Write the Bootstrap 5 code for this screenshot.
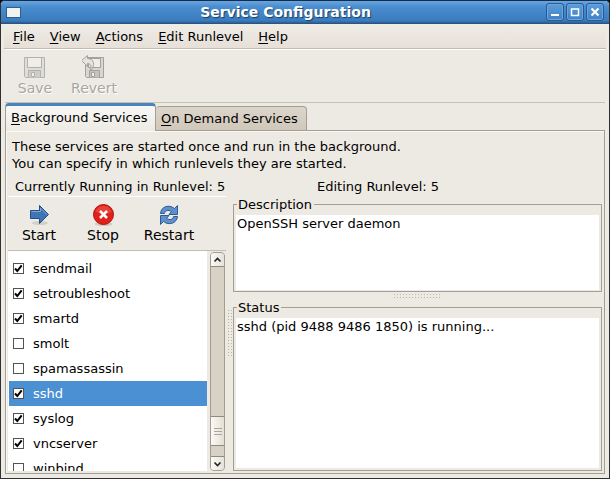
<!DOCTYPE html>
<html lang="en">
<head>
<meta charset="utf-8">
<meta name="viewport" content="width=device-width, initial-scale=1">
<title>Service Configuration</title>
<link href="https://cdn.jsdelivr.net/npm/bootstrap@5.3.0/dist/css/bootstrap.min.css" rel="stylesheet">
<style>
:root { --face: #edeae3; --edge: #a39f94; --blue: #4a90d2; }
body { font: 13px/17px "DejaVu Sans", sans-serif; color: #000; background: #111; }
.window { height: 100vh; background: var(--face); border: 1px solid #303030; border-top-color: #142c4c; border-radius: 5px 5px 0 0; }
.titlebar { height: 23px; padding: 0 5px; background: linear-gradient(#6aa6de, #4a8ed0 25%, #3a7bbd 90%, #2b5d92); border-bottom: 1px solid #2b5580; }
.titlebar h1 { font-size: 14px; line-height: 21px; font-weight: 700; color: #fff; text-shadow: 1px 1px 1px #1b3d66; }
.sysmenu { width: 15px; height: 11px; background: #f0f2ef; border: 1px solid #2e608f; }
.winbtn { width: 18px; height: 18px; border: 1px solid #28598f; border-radius: 3px; background: linear-gradient(#5b9cda, #3f82c6); box-shadow: inset 0 0 0 1px #6ba6de; }
.controls { gap: 2px; }
.controls svg { display: block; }
.menus { height: 25px; padding: 0 5px; background: linear-gradient(#efece6, #e6e0d8); border-bottom: 1px solid #c1bbb0; margin: 0 3px; }
.menus a, .page-tab { color: #000; text-decoration: none; }
.menus a { padding: 0 4px; margin-right: 7px; }
u { text-underline-offset: 2px; }
.toolbar { height: 54px; margin: 0 4px; padding: 5px 8px 0; border-top: 1px solid #fff; border-bottom: 1px solid #c7c2b8; }
.tool { border: 0; background: none; padding: 0; color: #000; font-size: 14px; line-height: 16px; }
.tool svg { display: block; margin: 0 auto; }
.toolbar .tool { color: #aaa69e; text-shadow: 1px 1px 0 #fff; }
.tool-save { width: 44px; }
.tool-revert { width: 74px; }
.tabs { height: 28px; margin: 0 4px; position: relative; z-index: 1; }
.page-tab { min-width: 151px; border: 1px solid var(--edge); border-radius: 4px 4px 0 0; padding: 0 5px; background: linear-gradient(#dcd5c9, #d0c8ba); height: 25px; line-height: 24px; border-left: 0; }
.page-tab.active { height: 28px; line-height: 24px; border-left: 1px solid var(--edge); border-top: 3px solid #4885bd; border-bottom: 0; background: linear-gradient(#f8f8f5, var(--face)); }
.page-pane { margin: -1px 4px 4px; border: 1px solid var(--edge); padding: 7px 2px 2px; box-shadow: inset 1px 1px 0 #faf8f4; }
.intro { padding-left: 4px; }
.levels { padding: 6px 7px 0; height: 24px; }
.level-run { width: 302px; }
.left-pane { width: 218px; }
.actions { height: 55px; border-top: 1px solid #fff; border-bottom: 1px solid #c1bcb1; padding: 6px 6px 0; }
.act-start { width: 50px; }
.act-stop { width: 78px; }
.act-restart { width: 54px; }
.services { background: #fff; padding: 5px 0 0 1px; }
.service { height: 25px; padding-left: 4px; gap: 9px; flex: none; }
.service.picked { background: var(--blue); color: #fff; }
.service input { appearance: none; width: 11px; height: 11px; margin: 0; border: 1px solid #55534e; background: #fff; flex: none; }
.service input:checked { background: #fff url("data:image/svg+xml,%3Csvg xmlns='http://www.w3.org/2000/svg' viewBox='0 0 9 9'%3E%3Cpath d='M1 4.5 3.3 7 7.7 1.3' fill='none' stroke='%23000' stroke-width='2'/%3E%3C/svg%3E") center / 9px 9px no-repeat; }
.scroller { width: 15px; margin: 1px 1px 0 3px; background: #d8d2c6; border: 1px solid #a39d91; border-radius: 4px; }
.scroller button { height: 14px; padding: 0; border: 0; background: linear-gradient(90deg, #fbfaf7, #e6e1d9); }
.scroller button:first-child { border-bottom: 1px solid #8f897e; border-radius: 3px 3px 0 0; }
.scroller button:last-child { border-top: 1px solid #8f897e; border-radius: 0 0 3px 3px; }
.scroller svg { display: block; margin: auto; }
.thumb { height: 30px; margin-bottom: 10px; border: solid #8f897e; border-width: 1px 0; background: linear-gradient(90deg, #fbfaf7, #e4dfd6); gap: 2px; }
.thumb span { width: 8px; height: 1px; background: #aaa59b; }
.grip { background: radial-gradient(circle, #b9b4a9 0 1px, transparent 1px) 0 0 / 3px 3px; }
.grip-v { width: 5px; height: 48px; margin: 113px 1px 0; }
.grip-h { width: 49px; height: 5px; margin: 1px auto; }
.framed { border: 1px solid var(--edge); padding: 2px; margin: 0; min-width: 0; }
.framed legend { float: none; width: auto; font-size: 13px; line-height: 17px; margin: 0 0 0 1px; padding: 0 2px 0 1px; }
.readout { background: #fff; padding: 0 1px; overflow: hidden; }
.desc-box { height: 96px; }
.desc-box .readout { height: 75px; }
.status-box .readout { height: 100%; }
</style>
<script src="https://cdn.jsdelivr.net/npm/bootstrap@5.3.0/dist/js/bootstrap.bundle.min.js"></script>
</head>
<body>
<div class="window d-flex flex-column overflow-hidden">
  <header class="titlebar d-flex align-items-center flex-shrink-0">
    <span class="sysmenu"></span>
    <h1 class="flex-grow-1 text-center m-0 ps-1">Service Configuration</h1>
    <div class="controls d-flex">
      <button class="winbtn p-0" aria-label="Minimize"><svg width="16" height="16"><path d="M4 11h8" stroke="#fff" stroke-width="2"/></svg></button>
      <button class="winbtn p-0" aria-label="Maximize"><svg width="16" height="16"><path d="M4.500 5h7v6.500h-7zM4 5h8" fill="none" stroke="#fff" stroke-width="1.500"/></svg></button>
      <button class="winbtn p-0" aria-label="Close"><svg width="16" height="16"><path d="m4.500 4.500 7 7m0-7-7 7" stroke="#fff" stroke-width="2.200"/></svg></button>
    </div>
  </header>
  <nav class="menus d-flex align-items-center flex-shrink-0">
    <a href="#"><u>F</u>ile</a><a href="#"><u>V</u>iew</a><a href="#"><u>A</u>ctions</a><a href="#"><u>E</u>dit Runlevel</a><a href="#"><u>H</u>elp</a>
  </nav>
  <div class="toolbar d-flex align-items-start flex-shrink-0">
    <button class="tool tool-save" disabled><svg width="24" height="25" viewBox="0 0 24 25" fill="none" stroke="#b3b1ab"><path d="M1.500 2.500h20v20h-19l-1-1z" fill="#dfddd7"/><path d="M4.500 2.500h14v10h-14z" fill="#eeede8"/><path d="M5.500 22.500v-7h12v7" fill="#cfcdc7"/><path d="M8.500 17.500h3v4h-3z" fill="#f0eee9"/></svg>Save</button>
    <button class="tool tool-revert" disabled><svg width="24" height="25" viewBox="0 0 24 25" fill="none" stroke="#a3a19b"><path d="M3.500 2.500h18v20h-17l-1-1z" fill="#d8d6d0"/><path d="M6.500 3.500h12v9h-12z" fill="#eeede8"/><path d="M7.500 22.500v-7h10v7" fill="#c4c2bc"/><path d="M9.500 17.500h3v4h-3z" fill="#f0eee9"/><path d="M-.5 5.500 5.500.5v3c7 0 8 7 3 12 1-5 0-7-3-7v3z" fill="#e5e3dd"/></svg>Revert</button>
  </div>
  <div class="tabs d-flex align-items-end flex-shrink-0">
    <a href="#" class="page-tab active"><u>B</u>ackground Services</a>
    <a href="#" class="page-tab"><u>O</u>n Demand Services</a>
  </div>
  <main class="page-pane d-flex flex-column flex-grow-1 overflow-hidden">
    <p class="intro m-0">These services are started once and run in the background.<br>You can specify in which runlevels they are started.</p>
    <div class="levels d-flex flex-shrink-0"><span class="level-run">Currently Running in Runlevel: 5</span><span>Editing Runlevel: 5</span></div>
    <div class="d-flex flex-grow-1 overflow-hidden">
      <section class="left-pane d-flex flex-column flex-shrink-0">
        <div class="actions d-flex flex-shrink-0 align-items-start">
          <button class="tool act-start"><svg width="24" height="24" viewBox="0 0 24 24"><ellipse cx="13" cy="20" rx="8" ry="2" fill="#d2cfc7"/><path d="M3.500 7.500h9V2.500l9 9-9 9v-5h-9z" fill="#3f74b5" stroke="#244d82"/><path d="M4.500 8.500h9V5l6.500 6.500" fill="none" stroke="#7da8d8"/></svg>Start</button>
          <button class="tool act-stop"><svg width="24" height="24" viewBox="0 0 24 24"><ellipse cx="12.500" cy="21" rx="9" ry="2" fill="#cfccc4"/><circle cx="12.500" cy="11.500" r="10" fill="#e0201b" stroke="#b00e0b"/><path d="M4.500 9c2-8 14-8 16 0-4 3-10 1-16 0z" fill="#f0604f" opacity=".5"/><path d="m9 8 7 7m0-7-7 7" stroke="#fff" stroke-width="2.500"/></svg>Stop</button>
          <button class="tool act-restart"><svg width="24" height="24" viewBox="0 0 24 24" fill="#5e90cb" stroke="#2f5c95"><path d="M3.500 10.500C4 3.500 12 1 17.500 5.500l3-3v9h-8.500l2.500-3C11 6.500 8 7.500 7.500 10.500z"/><path d="M20.500 13.500C20 20 12 23 6.500 18.500l-3 3v-9H12l-2.500 3c3.500 2 6.500 1 7-2z"/></svg>Restart</button>
        </div>
        <div class="d-flex flex-grow-1 overflow-hidden">
          <div class="services flex-grow-1 overflow-hidden">
            <label class="service d-flex align-items-center"><input type="checkbox" checked>sendmail</label>
            <label class="service d-flex align-items-center"><input type="checkbox" checked>setroubleshoot</label>
            <label class="service d-flex align-items-center"><input type="checkbox" checked>smartd</label>
            <label class="service d-flex align-items-center"><input type="checkbox">smolt</label>
            <label class="service d-flex align-items-center"><input type="checkbox">spamassassin</label>
            <label class="service picked d-flex align-items-center"><input type="checkbox" checked>sshd</label>
            <label class="service d-flex align-items-center"><input type="checkbox" checked>syslog</label>
            <label class="service d-flex align-items-center"><input type="checkbox" checked>vncserver</label>
            <label class="service d-flex align-items-center"><input type="checkbox">winbind</label>
          </div>
          <div class="scroller d-flex flex-column flex-shrink-0">
            <button aria-label="Scroll up"><svg width="9" height="6"><path d="m1.500 4.500 3-3 3 3" fill="none" stroke="#222" stroke-width="1.600"/></svg></button>
            <div class="thumb mt-auto d-flex flex-column align-items-center justify-content-center"><span></span><span></span><span></span></div>
            <button aria-label="Scroll down"><svg width="9" height="6"><path d="m1.500 1.500 3 3 3-3" fill="none" stroke="#222" stroke-width="1.600"/></svg></button>
          </div>
        </div>
      </section>
      <div class="grip grip-v flex-shrink-0"></div>
      <section class="d-flex flex-column flex-grow-1">
        <fieldset class="framed desc-box flex-shrink-0"><legend>Description</legend><div class="readout">OpenSSH server daemon</div></fieldset>
        <div class="grip grip-h flex-shrink-0"></div>
        <fieldset class="framed status-box flex-grow-1"><legend>Status</legend><div class="readout">sshd (pid 9488 9486 1850) is running...</div></fieldset>
      </section>
    </div>
  </main>
</div>
</body>
</html>
